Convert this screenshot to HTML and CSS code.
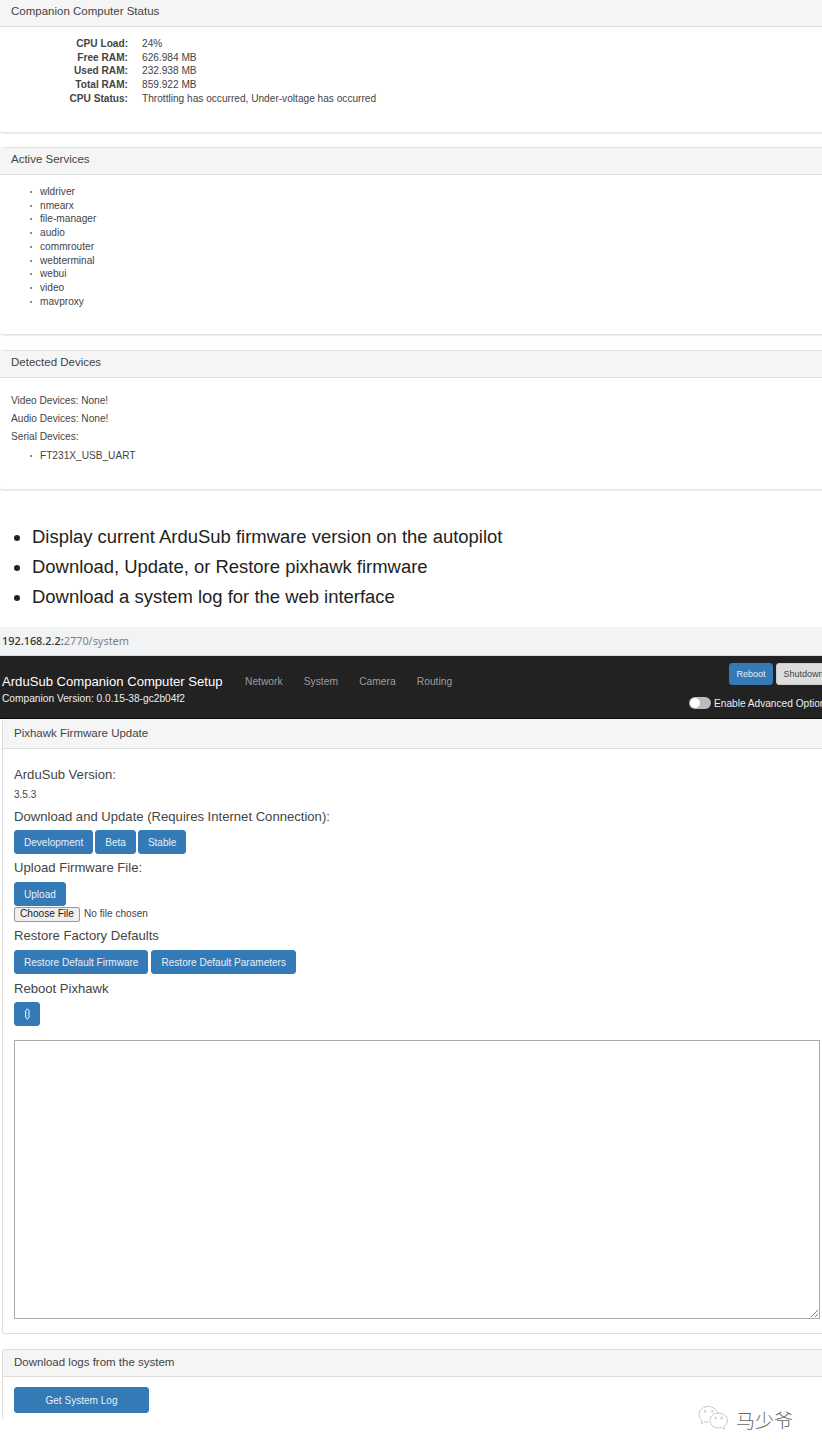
FILE: index.html
```html
<!DOCTYPE html>
<html lang="en">
<head>
<meta charset="utf-8">
<title>ArduSub Companion Computer Setup</title>
<link rel="stylesheet" href="styles.css">
</head>
<body>
<section class="panel panel-status">
  <div class="panel-heading">Companion Computer Status</div>
  <dl class="stats">
    <dt>CPU Load:</dt><dd>24%</dd>
    <dt>Free RAM:</dt><dd>626.984 MB</dd>
    <dt>Used RAM:</dt><dd>232.938 MB</dd>
    <dt>Total RAM:</dt><dd>859.922 MB</dd>
    <dt>CPU Status:</dt><dd>Throttling has occurred, Under-voltage has occurred</dd>
  </dl>
</section>
<section class="panel panel-services">
  <div class="panel-heading">Active Services</div>
  <ul class="small-list services">
    <li>wldriver</li><li>nmearx</li><li>file-manager</li><li>audio</li><li>commrouter</li><li>webterminal</li><li>webui</li><li>video</li><li>mavproxy</li>
  </ul>
</section>
<section class="panel panel-devices">
  <div class="panel-heading">Detected Devices</div>
  <div class="devices">
    <p>Video Devices: None!</p>
    <p>Audio Devices: None!</p>
    <p>Serial Devices:</p>
    <ul class="small-list"><li>FT231X_USB_UART</li></ul>
  </div>
</section>
<ul class="article-list">
  <li>Display current ArduSub firmware version on the autopilot</li>
  <li>Download, Update, or Restore pixhawk firmware</li>
  <li>Download a system log for the web interface</li>
</ul>
<div class="address"><b>192.168.2.2:</b>2770/system</div>
<nav class="navbar">
  <div class="brand">
    <div class="brand-title">ArduSub Companion Computer Setup</div>
    <div class="brand-version">Companion Version: 0.0.15-38-gc2b04f2</div>
  </div>
  <div class="nav-links"><a>Network</a><a>System</a><a>Camera</a><a>Routing</a></div>
  <div class="nav-right">
    <div class="nav-buttons"><button class="btn btn-nav">Reboot</button><button class="btn btn-nav btn-light">Shutdown</button></div>
    <div class="advanced"><span class="toggle"><span class="knob"></span></span><span class="advanced-label">Enable Advanced Options</span></div>
  </div>
</nav>
<section class="panel panel-firmware">
  <div class="panel-heading">Pixhawk Firmware Update</div>
  <div class="firmware">
    <h4 class="label-version">ArduSub Version:</h4>
    <p class="version">3.5.3</p>
    <h4 class="label-download">Download and Update (Requires Internet Connection):</h4>
    <div class="btn-row"><button class="btn">Development</button><button class="btn">Beta</button><button class="btn">Stable</button></div>
    <h4 class="label-upload">Upload Firmware File:</h4>
    <button class="btn btn-upload">Upload</button>
    <div class="file-row"><span class="file-btn">Choose File</span><span class="file-name">No file chosen</span></div>
    <h4 class="label-restore">Restore Factory Defaults</h4>
    <div class="btn-row btn-row-wide"><button class="btn">Restore Default Firmware</button><button class="btn">Restore Default Parameters</button></div>
    <h4 class="label-reboot">Reboot Pixhawk</h4>
    <button class="btn btn-icon"><svg width="7" height="12" viewBox="0 0 7 12" fill="none" stroke="#fff" stroke-width="1"><path d="M1.700 2.500 3.300 .8 5 2.500v7L3.300 11.200 1.700 9.500z"/></svg></button>
    <div class="log-box"><span class="grip"><svg width="11" height="11" viewBox="0 0 11 11" stroke="#777" stroke-width="1"><path d="M10 3 3 10M10 7 7 10"/></svg></span></div>
  </div>
</section>
<section class="panel panel-logs">
  <div class="panel-heading">Download logs from the system</div>
  <div class="logs"><button class="btn btn-log">Get System Log</button></div>
</section>
<div class="watermark">
  <svg width="32" height="28" viewBox="0 0 32 28" fill="none" stroke="#aaa" stroke-width=".8" stroke-dasharray="2 .6"><path d="M10.500 1.500C5 1.500 1 5 1 9.500c0 2.500 1.300 4.500 3 6l-.5 3 3.500-1.800c1 .3 2 .4 3 .4M20.500 9C18.500 4.500 15 1.500 10.500 1.500"/><path d="M20.500 8C15.500 8 12 11.200 12 15.500S15.500 23 20.500 23c1 0 2-.1 3-.5l3 1.700-.6-2.700c2.200-1.400 3.600-3.600 3.600-6C29.500 11.200 25.500 8 20.500 8z"/><circle cx="7" cy="6.500" r=".8"/><circle cx="14" cy="6.500" r=".8"/><circle cx="17.500" cy="13" r=".8"/><circle cx="23.500" cy="13" r=".8"/></svg>
  <span>马少爷</span>
</div>
</body>
</html>
```
FILE: styles.css
```css
* { box-sizing: border-box; }
html, body { margin: 0; padding: 0; }
body {
  position: relative;
  width: 822px;
  height: 1456px;
  overflow: hidden;
  background: #fff;
  color: #444;
  font-family: "Liberation Sans", Arial, sans-serif;
  font-size: 10.150px;
}
.panel {
  background: #fff;
  border: 1px solid #e4e4e4;
  border-right: 0;
  border-left: 0;
  border-radius: 3px 0 0 3px;
}
.panel-heading {
  height: 27px;
  padding: 3px 11px 0;
  line-height: 16px;
  font-size: 11.500px;
  background: #f5f5f5;
  border-bottom: 1px solid #ddd;
  color: #444;
}
.panel-status { height: 134px; margin-top: -1px; box-shadow: 0 1px 1px rgba(0,0,0,.08); }
.panel-services { height: 188px; margin-top: 14px; box-shadow: 0 1px 1px rgba(0,0,0,.08); }
.panel-devices { height: 140px; margin-top: 15px; box-shadow: 0 1px 1px rgba(0,0,0,.08); }
.stats {
  display: grid;
  grid-template-columns: 128px 1fr;
  column-gap: 14px;
  margin: 10px 0 0;
  line-height: 13.700px;
}
.stats dt { font-weight: 700; text-align: right; }
.stats dd { margin: 0; }
.small-list {
  margin: 0;
  padding-left: 40px;
  line-height: 13.700px;
  list-style: none;
}
.small-list li { position: relative; }
.small-list li::before {
  content: "";
  position: absolute;
  left: -10px;
  top: 6px;
  width: 2px;
  height: 2px;
  border-radius: 50%;
  background: #666;
}
.services { margin-top: 10px; }
.devices { padding: 16px 11px 0; }
.devices p { margin: 0 0 4.200px; line-height: 13.700px; }
.devices .small-list { padding-left: 29px; margin-top: 6px; }
.article-list {
  margin: 32px 0 0;
  padding-left: 32px;
  font-size: 18.460px;
  line-height: 30px;
  color: #222;
}
.address {
  height: 29px;
  margin-top: 15px;
  padding: 6px 2px 0;
  background: #f1f3f4;
  border-bottom: 1px solid #ddd;
  font-family: "Noto Sans", sans-serif;
  font-size: 10.900px;
  line-height: 16px;
  color: #7a8288;
}
.address b { font-weight: 500; color: #333; }
.navbar {
  display: flex;
  height: 63px;
  background: #222;
  border-bottom: 1px solid #080808;
}
.brand { padding: 17px 0 0 2px; width: 245px; flex: none; }
.brand-title { font-size: 13.100px; line-height: 18px; color: #fff; }
.brand-version { margin-top: 1px; font-size: 10.200px; line-height: 14px; color: #eee; }
.nav-links { display: flex; flex: none; gap: 21.200px; padding-top: 19px; font-size: 10.250px; line-height: 14px; color: #9d9d9d; }
.nav-right {
  display: flex;
  flex: none;
  flex-direction: column;
  width: 133px;
  margin-left: auto;
  padding-top: 7px;
  white-space: nowrap;
}
.nav-buttons { display: flex; gap: 3px; margin-left: 40px; }
.advanced { display: flex; align-items: center; margin-top: 12px; color: #eee; font-size: 10.150px; }
.toggle { position: relative; flex: none; width: 22px; height: 12px; margin-right: 3px; border-radius: 6px; background: #bbb; }
.knob { position: absolute; left: 1px; top: 1px; width: 10px; height: 10px; border-radius: 50%; background: #fff; }
.btn {
  display: inline-block;
  flex: none;
  height: 24px;
  padding: 0 9px;
  font: 10.050px "Liberation Sans", Arial, sans-serif;
  color: #e8f0f7;
  background: #337ab7;
  border: 1px solid #337ab7;
  border-radius: 3px;
}
.btn-nav { height: 22px; padding: 0 6.500px; font-size: 9px; }
.btn-light { background: #ddd; border-color: #ccc; color: #444; }
.panel-firmware {
  height: 615px;
  margin-left: 2px;
  border: 1px solid #ddd;
  border-top: 0;
  border-right: 0;
}
.panel-firmware .panel-heading { height: 30px; padding-top: 6px; }
.firmware { padding: 0 0 0 11px; }
.firmware h4 { margin: 0; font-weight: 400; font-size: 13.100px; line-height: 16px; color: #444; }
.label-version { padding-top: 18px; }
.version { margin: 6px 0 0; font-size: 10px; line-height: 12px; }
.firmware .label-download { margin-top: 8px; }
.btn-row { display: flex; gap: 2px; margin-top: 5px; }
.btn-row-wide { gap: 3px; margin-top: 6px; }
.firmware .label-upload { margin-top: 6px; }
.btn-upload { display: block; height: 24px; margin-top: 6px; }
.file-row { display: flex; align-items: center; height: 15px; margin-top: 1px; font-size: 10.100px; }
.file-btn {
  display: inline-block;
  width: 66px;
  height: 15px;
  line-height: 12px;
  text-align: center;
  color: #222;
  background: #efefef;
  border: 1px solid #999;
  border-radius: 2px;
}
.file-name { margin-left: 4px; padding-bottom: 2px; }
.firmware .label-restore { margin-top: 6px; }
.firmware .label-reboot { margin-top: 7px; }
.btn-icon { display: flex; align-items: center; justify-content: center; width: 26px; margin-top: 5px; padding: 0; }
.log-box {
  position: relative;
  width: 806px;
  height: 279px;
  margin-top: 14px;
  border: 1px solid #aaa;
  background: #fff;
}
.grip { position: absolute; right: 0; bottom: 0; line-height: 0; }
.panel-logs {
  height: 70px;
  margin-top: 15px;
  margin-left: 2px;
  border: 1px solid #ddd;
  border-bottom: 0;
  border-right: 0;
  overflow: hidden;
}
.panel-logs .panel-heading { height: 27px; padding-top: 4px; }
.logs { padding: 10px 11px 0; }
.btn-log { width: 135px; height: 26px; }
.watermark {
  position: absolute;
  left: 698px;
  top: 1405px;
  display: flex;
  align-items: center;
  gap: 6px;
  font-family: "Noto Sans CJK SC", sans-serif;
  font-size: 19px;
  font-weight: 300;
  color: #666;
}
```
